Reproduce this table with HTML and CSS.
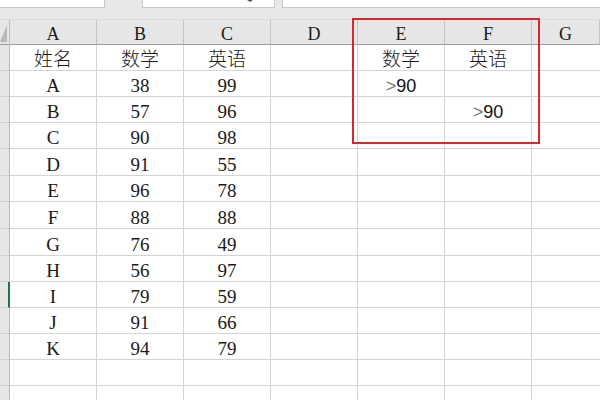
FILE: index.html
```html
<!DOCTYPE html>
<html lang="zh">
<head>
<meta charset="utf-8">
<title>Sheet</title>
<link rel="stylesheet" href="styles.css">
</head>
<body>
<div class="topbar">
  <div class="box box1"></div>
  <div class="box box2"><span class="drop"></span></div>
  <div class="box box3"></div>
</div>
<div class="sheet">
  <div class="grid">
    <div class="corner"><svg width="9" height="25" viewBox="0 0 9 25"><polygon points="7,5 7,22 0,22" fill="#b9b9b9"/></svg></div>
    <div class="ch">A</div><div class="ch">B</div><div class="ch">C</div><div class="ch">D</div><div class="ch">E</div><div class="ch">F</div><div class="ch last">G</div>

    <div class="rh"></div><div class="c cn">姓名</div><div class="c cn">数学</div><div class="c cn">英语</div><div class="c"></div><div class="c cn">数学</div><div class="c cn">英语</div><div class="c last"></div>
    <div class="rh"></div><div class="c">A</div><div class="c">38</div><div class="c">99</div><div class="c"></div><div class="c cond"><span class="gt">&gt;</span>90</div><div class="c"></div><div class="c last"></div>
    <div class="rh"></div><div class="c">B</div><div class="c">57</div><div class="c">96</div><div class="c"></div><div class="c"></div><div class="c cond"><span class="gt">&gt;</span>90</div><div class="c last"></div>
    <div class="rh"></div><div class="c">C</div><div class="c">90</div><div class="c">98</div><div class="c"></div><div class="c"></div><div class="c"></div><div class="c last"></div>
    <div class="rh"></div><div class="c">D</div><div class="c">91</div><div class="c">55</div><div class="c"></div><div class="c"></div><div class="c"></div><div class="c last"></div>
    <div class="rh"></div><div class="c">E</div><div class="c">96</div><div class="c">78</div><div class="c"></div><div class="c"></div><div class="c"></div><div class="c last"></div>
    <div class="rh"></div><div class="c">F</div><div class="c">88</div><div class="c">88</div><div class="c"></div><div class="c"></div><div class="c"></div><div class="c last"></div>
    <div class="rh"></div><div class="c">G</div><div class="c">76</div><div class="c">49</div><div class="c"></div><div class="c"></div><div class="c"></div><div class="c last"></div>
    <div class="rh"></div><div class="c">H</div><div class="c">56</div><div class="c">97</div><div class="c"></div><div class="c"></div><div class="c"></div><div class="c last"></div>
    <div class="rh active"></div><div class="c">I</div><div class="c">79</div><div class="c">59</div><div class="c"></div><div class="c"></div><div class="c"></div><div class="c last"></div>
    <div class="rh"></div><div class="c">J</div><div class="c">91</div><div class="c">66</div><div class="c"></div><div class="c"></div><div class="c"></div><div class="c last"></div>
    <div class="rh"></div><div class="c">K</div><div class="c">94</div><div class="c">79</div><div class="c"></div><div class="c"></div><div class="c"></div><div class="c last"></div>
    <div class="rh"></div><div class="c"></div><div class="c"></div><div class="c"></div><div class="c"></div><div class="c"></div><div class="c"></div><div class="c last"></div>
    <div class="rh"></div><div class="c"></div><div class="c"></div><div class="c"></div><div class="c"></div><div class="c"></div><div class="c"></div><div class="c last"></div>
  </div>
</div>
<div class="highlight"></div>
</body>
</html>
```
FILE: styles.css
```css
html, body {
  margin: 0;
  padding: 0;
  background: #ffffff;
  width: 600px;
  height: 400px;
  overflow: hidden;
}

.topbar {
  height: 20px;
  background: #e8e8e8;
  display: flex;
  align-items: flex-start;
  box-sizing: border-box;
  border-bottom: 1px solid #dadada;
}

.box {
  height: 8px;
  background: #ffffff;
  box-sizing: border-box;
  border: 1px solid #c8c8c8;
  border-top: none;
}

.box1 { width: 106px; margin-left: -1px; border-left: none; }
.box2 { width: 133px; margin-left: 37px; position: relative; }
.box3 { flex: 1; margin-left: 7px; border-right: none; }

.drop {
  position: absolute;
  left: 104px;
  top: 0;
  width: 0;
  height: 0;
  border-left: 3px solid transparent;
  border-right: 3px solid transparent;
  border-top: 2px solid #555;
}

.sheet {
  height: 380px;
  overflow: hidden;
}

.grid {
  display: grid;
  grid-template-columns: 10px 87px 87px 87px 87px 87px 87px 1fr;
  grid-template-rows: 25px 26px 26px 26px 26px 27px 26px 27px 27px 26px 26px 26px 26px 26px 26px;
  font-family: "Liberation Serif", "Noto Sans CJK SC", serif;
  font-size: 19px;
  color: #1a1a1a;
}

.corner {
  background: #e6e6e6;
  border-right: 1px solid #bcbcbc;
  border-bottom: 1px solid #9e9e9e;
  box-sizing: border-box;
  overflow: hidden;
}

.corner svg { display: block; }

.ch {
  background: #e6e6e6;
  box-sizing: border-box;
  border-right: 1px solid #c4c4c4;
  border-bottom: 1px solid #9e9e9e;
  display: flex;
  align-items: flex-end;
  justify-content: center;
  line-height: 19px;
  font-size: 18px;
}

.rh {
  background: #e6e6e6;
  box-sizing: border-box;
  border-right: 1px solid #bcbcbc;
  border-bottom: 1px solid #cfcfcf;
}

.rh.active {
  border-right: 2px solid #217346;
}

.c {
  box-sizing: border-box;
  border-right: 1px solid #d4d4d4;
  border-bottom: 1px solid #d4d4d4;
  display: flex;
  align-items: flex-end;
  justify-content: center;
  line-height: 20px;
  white-space: nowrap;
}

.c.last { border-right: none; }

.cn {
  font-family: "Noto Sans CJK SC", sans-serif;
  font-weight: 300;
  font-size: 19px;
  line-height: 24px;
}

.cond {
  font-family: "Liberation Sans", sans-serif;
  font-size: 18px;
  color: #111;
  line-height: 20px;
}

.gt {
  color: #777;
  font-weight: 300;
}

.highlight {
  position: absolute;
  left: 352px;
  top: 18px;
  width: 188px;
  height: 126px;
  box-sizing: border-box;
  border: 2px solid #d6262e;
  pointer-events: none;
}
```
